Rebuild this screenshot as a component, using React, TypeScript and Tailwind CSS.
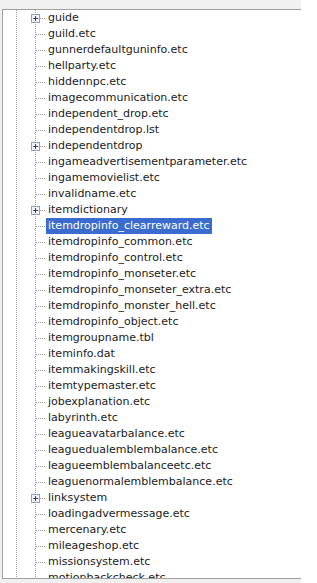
import React from "react";

type Item = { name: string; folder?: boolean };

const items: Item[] = [
  { name: "guide", folder: true },
  { name: "guild.etc" },
  { name: "gunnerdefaultguninfo.etc" },
  { name: "hellparty.etc" },
  { name: "hiddennpc.etc" },
  { name: "imagecommunication.etc" },
  { name: "independent_drop.etc" },
  { name: "independentdrop.lst" },
  { name: "independentdrop", folder: true },
  { name: "ingameadvertisementparameter.etc" },
  { name: "ingamemovielist.etc" },
  { name: "invalidname.etc" },
  { name: "itemdictionary", folder: true },
  { name: "itemdropinfo_clearreward.etc" },
  { name: "itemdropinfo_common.etc" },
  { name: "itemdropinfo_control.etc" },
  { name: "itemdropinfo_monseter.etc" },
  { name: "itemdropinfo_monseter_extra.etc" },
  { name: "itemdropinfo_monster_hell.etc" },
  { name: "itemdropinfo_object.etc" },
  { name: "itemgroupname.tbl" },
  { name: "iteminfo.dat" },
  { name: "itemmakingskill.etc" },
  { name: "itemtypemaster.etc" },
  { name: "jobexplanation.etc" },
  { name: "labyrinth.etc" },
  { name: "leagueavatarbalance.etc" },
  { name: "leaguedualemblembalance.etc" },
  { name: "leagueemblembalanceetc.etc" },
  { name: "leaguenormalemblembalance.etc" },
  { name: "linksystem", folder: true },
  { name: "loadingadvermessage.etc" },
  { name: "mercenary.etc" },
  { name: "mileageshop.etc" },
  { name: "missionsystem.etc" },
  { name: "motionbackcheck.etc" },
];

const SELECTED = "itemdropinfo_clearreward.etc";

function TreeGuide({ folder }: { folder?: boolean }) {
  return (
    <svg width="42" height="16" className="shrink-0" shapeRendering="crispEdges">
      <line x1="13.5" y1="0" x2="13.5" y2="16" stroke="#a0a0a0" strokeDasharray="1 1" />
      <line x1="32.5" y1="0" x2="32.5" y2="16" stroke="#a0a0a0" strokeDasharray="1 1" />
      <line x1="33" y1="8.5" x2="42" y2="8.5" stroke="#a0a0a0" strokeDasharray="1 1" />
      {folder && (
        <g>
          <rect x="28.5" y="4.5" width="8" height="8" fill="#f4f4f4" stroke="#8f9db5" />
          <line x1="30" y1="8.5" x2="35" y2="8.5" stroke="#2a3f8f" />
          <line x1="32.5" y1="6" x2="32.5" y2="11" stroke="#2a3f8f" />
        </g>
      )}
    </svg>
  );
}

export default function App() {
  return (
    <div className="w-[301px] h-[583px] bg-[#f0f0f0] pt-[9px] pl-[2px] pb-[4px]">
      <div className="h-full bg-white border-t border-l border-b border-[#a0a0a0] overflow-hidden">
        <div className="flex flex-col">
          {items.map((item) => {
            const selected = item.name === SELECTED;
            return (
              <div key={item.name} className="flex items-center h-[16px]">
                <TreeGuide folder={item.folder} />
                <span
                  className={
                    "ml-[1px] px-[2px] h-[16px] leading-[16px] whitespace-nowrap text-[11px] font-['DejaVu_Sans',sans-serif] " +
                    (selected ? "bg-[#3a6ccf] text-white" : "text-[#1a1a1a]")
                  }
                >
                  {item.name}
                </span>
              </div>
            );
          })}
        </div>
      </div>
    </div>
  );
}
